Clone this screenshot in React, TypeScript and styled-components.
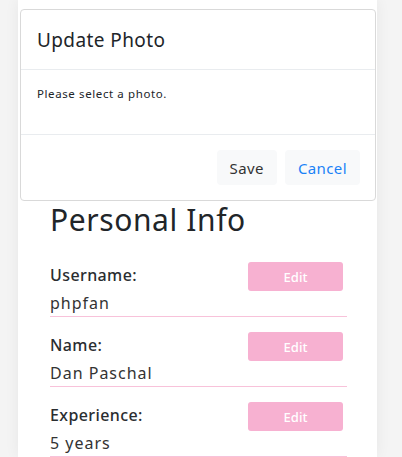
import React from "react";
import styled, { createGlobalStyle } from "styled-components";

const Global = createGlobalStyle`
  html, body { margin: 0; padding: 0; }
  body {
    background: #f4f4f4;
    font-family: "Noto Sans", "Open Sans", sans-serif;
    color: #212529;
    overflow: hidden;
  }
  * { box-sizing: border-box; }
`;

const Page = styled.div`
  position: relative;
  width: 402px;
  height: 457px;
  padding-left: 18px;
`;

const Card = styled.div`
  width: 359px;
  height: 457px;
  background: #fff;
  box-shadow: 0 0 14px rgba(0, 0, 0, 0.06);
  padding: 200px 30px 0 32px;
`;

const Heading = styled.h1`
  margin: 0 0 22px;
  font-size: 30px;
  font-weight: 400;
  line-height: 40px;
  letter-spacing: 0.6px;
  color: #212529;
`;

const Field = styled.div`
  border-bottom: 1px solid #f8c2da;
  margin-bottom: 15px;
`;

const FieldHead = styled.div`
  display: flex;
  justify-content: space-between;
  align-items: center;
  height: 29px;
  padding-right: 4px;
`;

const Label = styled.span`
  font-size: 16px;
  font-weight: 500;
  letter-spacing: 0.4px;
  color: #2a2d30;
  margin-top: -4px;
`;

const EditButton = styled.button`
  width: 95px;
  height: 29px;
  border: none;
  border-radius: 3px;
  background: #f7b1d1;
  color: #fff;
  font-family: inherit;
  font-size: 13px;
  font-weight: 500;
  padding: 0;
`;

const Value = styled.div`
  font-size: 16px;
  line-height: 25px;
  color: #333;
  letter-spacing: 1px;
`;

const Modal = styled.div`
  position: absolute;
  top: 9px;
  left: 20px;
  width: 356px;
  height: 192px;
  background: #fff;
  border: 1px solid #d9d9d9;
  border-radius: 4px;
  display: flex;
  flex-direction: column;
`;

const ModalHeader = styled.div`
  height: 60px;
  padding: 0 16px;
  display: flex;
  align-items: center;
  border-bottom: 1px solid #e9ecef;
`;

const ModalTitle = styled.h5`
  margin: 0;
  font-size: 19px;
  font-weight: 400;
  letter-spacing: 0.4px;
  color: #212529;
`;

const ModalBody = styled.div`
  height: 65px;
  padding: 16px 16px 0;
  font-size: 11.5px;
  letter-spacing: 0.6px;
  color: #212529;
  border-bottom: 1px solid #e9ecef;
`;

const ModalFooter = styled.div`
  flex: 1;
  display: flex;
  justify-content: flex-end;
  align-items: center;
  gap: 8px;
  padding: 0 15px 0 0;
`;

const FooterButton = styled.button<{ $primary?: boolean }>`
  height: 35px;
  padding: 0 13px;
  border: none;
  border-radius: 4px;
  background: #f8f9fa;
  color: ${(p) => (p.$primary ? "#1a82f7" : "#333")};
  font-family: inherit;
  font-size: 15px;
  letter-spacing: 0.4px;
`;

const fields = [
  { label: "Username:", value: "phpfan" },
  { label: "Name:", value: "Dan Paschal" },
  { label: "Experience:", value: "5 years" },
];

export default function App() {
  return (
    <>
      <Global />
      <Page>
        <Card>
          <Heading>Personal Info</Heading>
          {fields.map((f) => (
            <Field key={f.label}>
              <FieldHead>
                <Label>{f.label}</Label>
                <EditButton>Edit</EditButton>
              </FieldHead>
              <Value>{f.value}</Value>
            </Field>
          ))}
        </Card>
        <Modal>
          <ModalHeader>
            <ModalTitle>Update Photo</ModalTitle>
          </ModalHeader>
          <ModalBody>Please select a photo.</ModalBody>
          <ModalFooter>
            <FooterButton>Save</FooterButton>
            <FooterButton $primary>Cancel</FooterButton>
          </ModalFooter>
        </Modal>
      </Page>
    </>
  );
}
